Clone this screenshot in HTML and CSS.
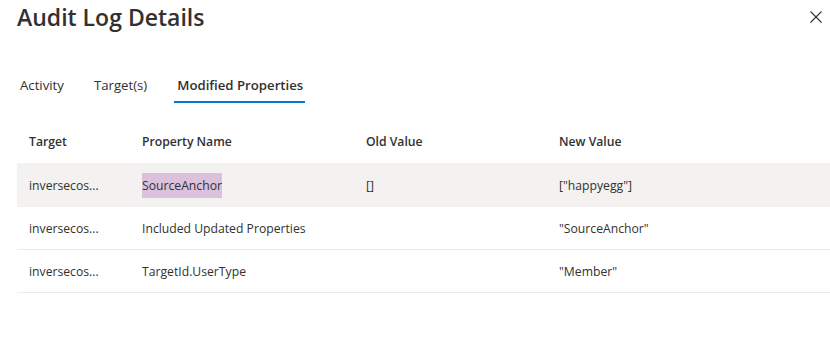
FILE: index.html
```html
<!DOCTYPE html>
<html>
<head>
<title>Audit Log Details</title>
<link rel="stylesheet" href="styles.css">
</head>
<body>

  <div class="panel">
    <div class="panel-header">
      <h1 class="panel-title">Audit Log Details</h1>
      <button class="close-button" aria-label="Close">
        <svg width="12" height="12" viewBox="0 0 12 12">
          <path d="M0.5 0.5 L11.5 11.5 M11.5 0.5 L0.5 11.5" stroke="#323130" stroke-width="1.1" fill="none"/>
        </svg>
      </button>
    </div>

    <div class="tabs">
      <button class="tab">Activity</button>
      <button class="tab">Target(s)</button>
      <button class="tab selected">Modified Properties</button>
    </div>

    <div class="details-list">
      <div class="row header-row">
        <div class="cell">Target</div>
        <div class="cell">Property Name</div>
        <div class="cell">Old Value</div>
        <div class="cell">New Value</div>
      </div>
      <div class="row hovered">
        <div class="cell">inversecos...</div>
        <div class="cell"><span class="highlight">SourceAnchor</span></div>
        <div class="cell">[]</div>
        <div class="cell">["happyegg"]</div>
      </div>
      <div class="row">
        <div class="cell">inversecos...</div>
        <div class="cell">Included Updated Properties</div>
        <div class="cell"></div>
        <div class="cell">"SourceAnchor"</div>
      </div>
      <div class="row">
        <div class="cell">inversecos...</div>
        <div class="cell">TargetId.UserType</div>
        <div class="cell"></div>
        <div class="cell">"Member"</div>
      </div>
    </div>
  </div>

</body>
</html>
```

FILE: styles.css
```css
body {
  margin: 0;
  padding: 0;
  background-color: white;
  font-family: "Open Sans", "Noto Sans", sans-serif;
  color: #323130;
}
.panel {
  padding-left: 17px;
}
.panel-header {
  display: flex;
  justify-content: space-between;
  align-items: flex-start;
  height: 59px;
}
.panel-title {
  margin: 0;
  padding-top: 1px;
  font-size: 23px;
  font-weight: 600;
  line-height: 32px;
}
.close-button {
  border: none;
  background: none;
  padding: 0;
  margin: 11px 8px 0 0;
  width: 12px;
  height: 12px;
  cursor: pointer;
}
.close-button svg {
  display: block;
}
.tabs {
  display: flex;
  gap: 10px;
  height: 52px;
  padding-left: 3px;
}
.tab {
  position: relative;
  border: none;
  background: none;
  padding: 0;
  height: 52px;
  font-family: inherit;
  font-size: 13.2px;
  color: #323130;
  line-height: 32px;
  cursor: pointer;
}
.tab + .tab {
  margin-left: 20px;
}
.tab.selected {
  font-weight: 600;
}
.tab.selected::after {
  content: "";
  position: absolute;
  left: -3px;
  right: -2px;
  top: 42px;
  height: 2px;
  background-color: #0078d4;
}
.details-list {
  margin-top: 10px;
  font-size: 12.2px;
}
.row {
  display: grid;
  grid-template-columns: 113px 224px 193px 1fr;
  padding-left: 12px;
  height: 42px;
  align-items: center;
  border-bottom: 1px solid #edebe9;
}
.header-row {
  font-weight: 600;
  height: 41px;
  border-bottom: 1px solid white;
}
.hovered {
  background-color: #f3f2f1;
  height: 44px;
  border-bottom: none;
}
.highlight {
  background-color: #dcc1dc;
  padding: 4px 0 4px;
}
```
